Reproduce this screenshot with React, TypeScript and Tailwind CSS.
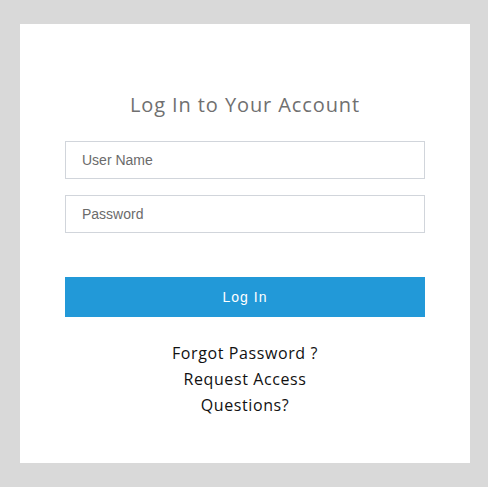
export default function App() {
  return (
    <div className="min-h-[487px] bg-[#d9d9d9] pl-5 pt-6 pb-6">
      <div className="w-[450px] h-[439px] bg-white flex flex-col items-center pt-[67px]">
        <h1 className="text-[20px] leading-7 text-[#707070] font-['Open_Sans',sans-serif] tracking-[0.9px]">
          Log In to Your Account
        </h1>
        <form className="w-[360px] mt-[22px] flex flex-col">
          <input
            type="text"
            placeholder="User Name"
            className="h-[38px] border border-[#d1d5db] px-4 text-[14px] font-['Liberation_Sans',sans-serif] placeholder:text-[#6b6b6b] outline-none"
          />
          <input
            type="password"
            placeholder="Password"
            className="h-[38px] mt-[16px] border border-[#d1d5db] px-4 text-[14px] font-['Liberation_Sans',sans-serif] placeholder:text-[#6b6b6b] outline-none"
          />
          <button
            type="button"
            className="h-10 mt-[44px] bg-[#2299d8] text-white text-[14px] tracking-[1px] font-['Liberation_Sans',sans-serif]"
          >
            Log In
          </button>
        </form>
        <div className="mt-[23px] flex flex-col items-center text-[16px] leading-[26px] text-[#111] font-['Open_Sans',sans-serif] tracking-[0.6px]">
          <a href="#">Forgot Password ?</a>
          <a href="#">Request Access</a>
          <a href="#">Questions?</a>
        </div>
      </div>
    </div>
  );
}
